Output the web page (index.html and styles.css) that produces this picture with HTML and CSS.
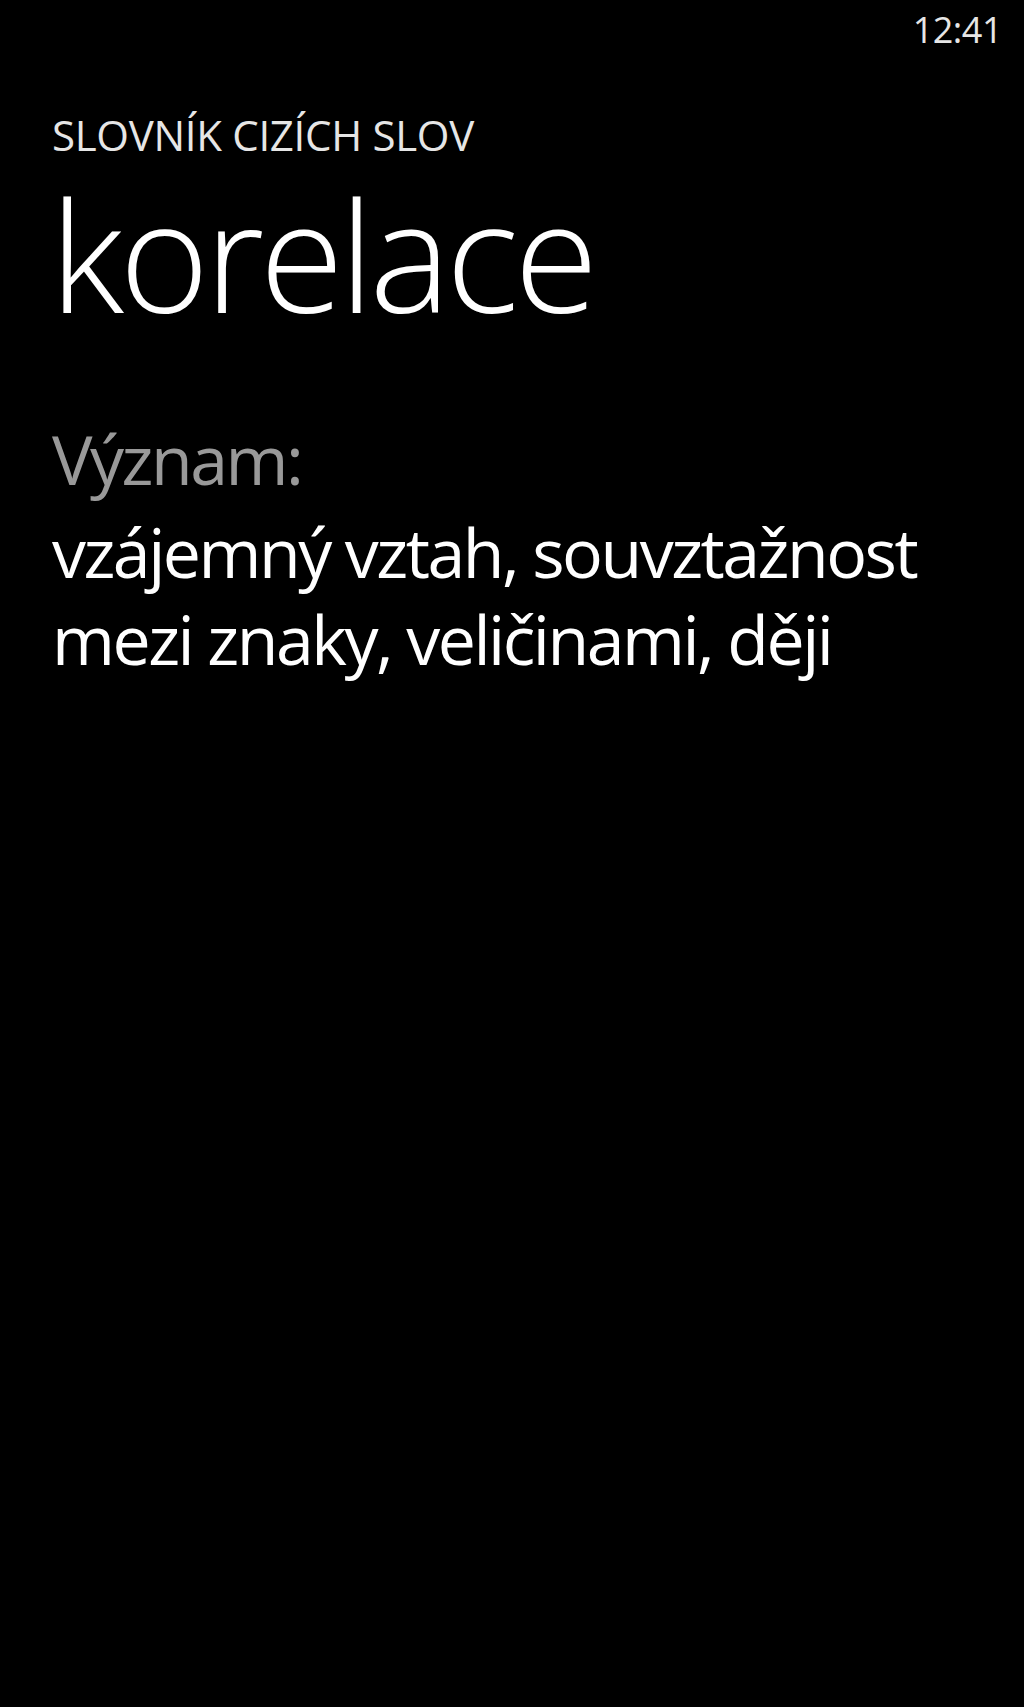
FILE: index.html
```html
<!DOCTYPE html>
<html lang="cs">
<head>
<meta charset="utf-8">
<title>korelace</title>
<link rel="stylesheet" href="styles.css">
</head>
<body>
<div class="screen">
  <div class="statusbar"><span class="time">12:41</span></div>
  <header class="header">
    <div class="app-title">SLOVNÍK CIZÍCH SLOV</div>
    <h1 class="page-title">korelace</h1>
  </header>
  <main class="content">
    <div class="label">Význam:</div>
    <p class="meaning">vzájemný vztah, souvztažnost<br>mezi znaky, veličinami, ději</p>
  </main>
</div>
</body>
</html>
```

FILE: styles.css
```css
html, body {
  margin: 0;
  padding: 0;
  background: #000;
}
.screen {
  width: 1024px;
  min-height: 1707px;
  background: #000;
  color: #fff;
  font-family: "Open Sans", "Noto Sans", sans-serif;
}
.statusbar {
  display: flex;
  justify-content: flex-end;
  padding: 10px 22px 0 0;
  height: 60px;
}
.time {
  font-size: 36px;
  line-height: 40px;
  letter-spacing: -0.5px;
  color: #e6e6e6;
}
.header {
  padding: 42px 0 0 52px;
}
.app-title {
  font-size: 42px;
  line-height: 46px;
  letter-spacing: -0.3px;
  color: #e6e6e6;
}
.page-title {
  margin: 21px 0 0 -2px;
  font-size: 153px;
  line-height: 150px;
  font-weight: 300;
  letter-spacing: -4.5px;
}
.content {
  padding: 84px 0 0 52px;
}
.label {
  font-size: 68px;
  line-height: 92px;
  letter-spacing: -2.5px;
  color: #999;
}
.meaning {
  margin: 3px 0 0;
  font-size: 68px;
  line-height: 87px;
  letter-spacing: -2.5px;
  color: #fff;
}
```
